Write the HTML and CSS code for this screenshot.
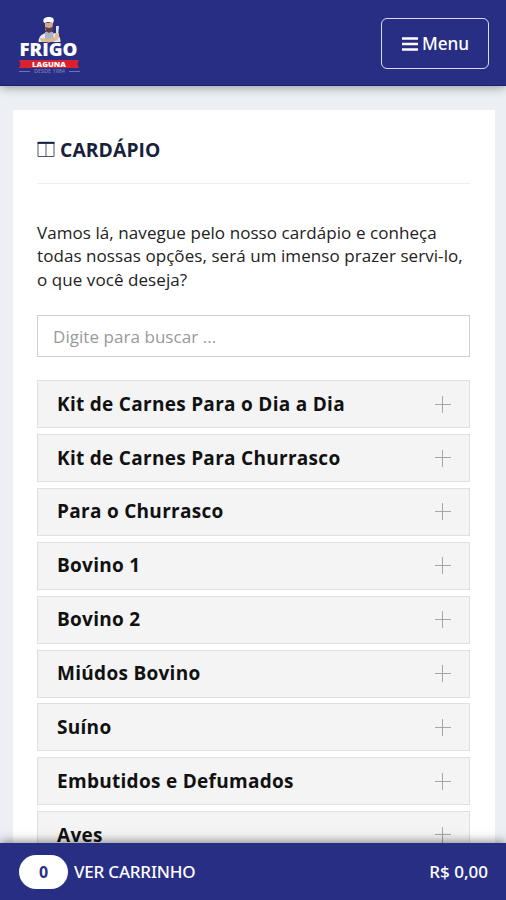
FILE: index.html
```html
<!DOCTYPE html>
<html lang="pt-BR">
<head>
<meta charset="utf-8">
<meta name="viewport" content="width=device-width, initial-scale=1">
<title>Cardápio</title>
<link rel="stylesheet" href="styles.css">
</head>
<body>
<header class="topbar">
  <svg class="logo" viewBox="0 0 64 58" role="img" aria-label="Frigo Laguna">
    <path d="M20.500 25c0-5 3-8 7-9l3 2 6-2c4 1 6 4 6 9z" fill="#e9e7ef"/>
    <path d="M27 15h8l1 10H27z" fill="#aeb2c8"/>
    <path d="M27 6h8l-1 8-2 2h-2l-3-3z" fill="#d9a987"/>
    <path d="M26 6c-2-4 1-6 5-6s6 2 4 6l-5-1z" fill="#fff"/>
    <path d="M27 10l4 1 4-1-1 4-3 2-3-2z" fill="#574147"/>
    <path d="M22 21l8 1 8-2 2 3-9 2.500-8-1z" fill="#e0b88d"/>
    <path d="M38 9h3l-1 11h-2z" fill="#dfe3ed"/>
    <path d="M37 16h4v5l-4 2z" fill="#e5bd91"/>
    <text class="logo-name" x="1.5" y="39" textLength="58" lengthAdjust="spacingAndGlyphs">FRIGO</text>
    <path d="M1 43h60l-1.500 4 1.500 4H1l1.500-4z" fill="#d9222d"/>
    <text class="logo-band" x="14" y="49.500" textLength="34" lengthAdjust="spacingAndGlyphs">LAGUNA</text>
    <path d="M1 54.500h11M51 54.500h11" stroke="#777bb5" stroke-width=".9"/>
    <text class="logo-date" x="16" y="56" textLength="31" lengthAdjust="spacingAndGlyphs">DESDE 1984</text>
  </svg>
  <button class="menu-button" type="button">
    <svg class="bars" viewBox="0 0 16 14"><path d="M0 1.5h16M0 7h16M0 12.5h16" stroke="currentColor" stroke-width="2.7"/></svg>
    <span>Menu</span>
  </button>
</header>
<main class="card">
  <h1 class="title">
    <svg class="columns" viewBox="0 0 18 17"><path d="M1 2h16v13.5H1zM9 2v13.5" fill="none" stroke="currentColor" stroke-opacity=".75"/><path d="M.5 1.8h17" stroke="currentColor" stroke-width="2"/></svg>
    <span>CARDÁPIO</span>
  </h1>
  <p class="intro">Vamos lá, navegue pelo nosso cardápio e conheça<br>todas nossas opções, será um imenso prazer servi-lo,<br>o que você deseja?</p>
  <input class="search" type="text" placeholder="Digite para buscar ...">
  <ul class="categories">
    <li class="category"><span>Kit de Carnes Para o Dia a Dia</span><i class="plus"></i></li>
    <li class="category"><span>Kit de Carnes Para Churrasco</span><i class="plus"></i></li>
    <li class="category"><span>Para o Churrasco</span><i class="plus"></i></li>
    <li class="category"><span>Bovino 1</span><i class="plus"></i></li>
    <li class="category"><span>Bovino 2</span><i class="plus"></i></li>
    <li class="category"><span>Miúdos Bovino</span><i class="plus"></i></li>
    <li class="category"><span>Suíno</span><i class="plus"></i></li>
    <li class="category"><span>Embutidos e Defumados</span><i class="plus"></i></li>
    <li class="category"><span>Aves</span><i class="plus"></i></li>
  </ul>
</main>
<footer class="cart">
  <span class="count">0</span>
  <span class="cart-label">VER CARRINHO</span>
  <span class="total">R$ 0,00</span>
</footer>
</body>
</html>
```
FILE: styles.css
```css
* { box-sizing: border-box; }
body {
  margin: 0;
  height: 900px;
  overflow: hidden;
  display: flex;
  flex-direction: column;
  background: #ecf0f4;
  color: #222;
  font-family: "Open Sans", sans-serif;
}
.topbar {
  flex: none;
  height: 86px;
  padding: 0 17px 0 18px;
  display: flex;
  align-items: center;
  justify-content: space-between;
  background: #292e85;
  border-bottom: 1px solid #1d2168;
  box-shadow: 0 1px 10px rgba(0, 0, 0, .4);
}
.logo { width: 64px; height: 58px; margin-top: 7px; }
.logo-name { font: 800 17.5px "Open Sans", sans-serif; fill: #fff; }
.logo-band { font: 800 7px "Open Sans", sans-serif; fill: #fff; }
.logo-date { font: 600 4.5px "Open Sans", sans-serif; fill: #777bb5; }
.menu-button {
  width: 108px;
  height: 51px;
  margin-top: 2px;
  padding: 0 0 0 1px;
  display: flex;
  align-items: center;
  justify-content: center;
  gap: 4px;
  border: 1.5px solid #d9dbf3;
  border-radius: 6px;
  background: transparent;
  color: #fff;
  font: 500 17.2px "Noto Sans", sans-serif;
}
.bars { width: 16px; height: 14px; }
.card {
  flex: 1;
  min-height: 0;
  overflow: hidden;
  margin: 24px 11px 0 13px;
  padding: 0 25px 0 24px;
  background: #fff;
}
.title {
  display: flex;
  align-items: center;
  gap: 5px;
  height: 74px;
  margin: 0;
  padding-top: 6px;
  border-bottom: 1px solid #eee;
  color: #17213b;
  font-size: 19.3px;
  font-weight: 700;
  letter-spacing: .1px;
}
.columns { width: 18px; height: 17px; }
.intro {
  margin: 36.5px 0 0;
  font-size: 17px;
  line-height: 23.6px;
  letter-spacing: .07px;
  white-space: nowrap;
}
.search {
  display: block;
  width: 100%;
  height: 42px;
  margin: 23.5px 0 0;
  padding: 1px 15px 0;
  border: 1px solid #cdd1d3;
  border-radius: 0;
  background: #fff;
  font: 17px "Open Sans", sans-serif;
  letter-spacing: .05px;
}
.search::placeholder { color: #999; opacity: 1; }
.categories {
  display: flex;
  flex-direction: column;
  gap: 5.85px;
  margin: 23.5px 0 0;
  padding: 0;
  list-style: none;
}
.category {
  flex: none;
  height: 48px;
  padding: 0 18px 0 19px;
  display: flex;
  align-items: center;
  justify-content: space-between;
  border: 1px solid #dfe0e1;
  background: #f4f4f4;
  color: #111;
  font-size: 19px;
  line-height: 24px;
  font-weight: 700;
  letter-spacing: .29px;
}
.category span { padding-bottom: 1px; }
.plus {
  width: 16px;
  height: 17px;
  background:
    linear-gradient(#a6a6a6, #a6a6a6) center / 100% 1.3px no-repeat,
    linear-gradient(#a6a6a6, #a6a6a6) center / 1.3px 100% no-repeat;
}
.cart {
  position: relative;
  flex: none;
  height: 57px;
  padding: 0 18px 0 19px;
  display: flex;
  align-items: center;
  background: #292e85;
  box-shadow: 0 -1px 10px rgba(0, 0, 0, .5);
  color: #fff;
  font: 500 17px "Noto Sans", sans-serif;
}
.count {
  width: 49px;
  height: 34px;
  margin-right: 6px;
  display: flex;
  align-items: center;
  justify-content: center;
  border-radius: 17px;
  background: #fff;
  color: #292e85;
  font-size: 16px;
  font-weight: 700;
}
.cart-label { letter-spacing: -.2px; }
.total { margin-left: auto; }
```
